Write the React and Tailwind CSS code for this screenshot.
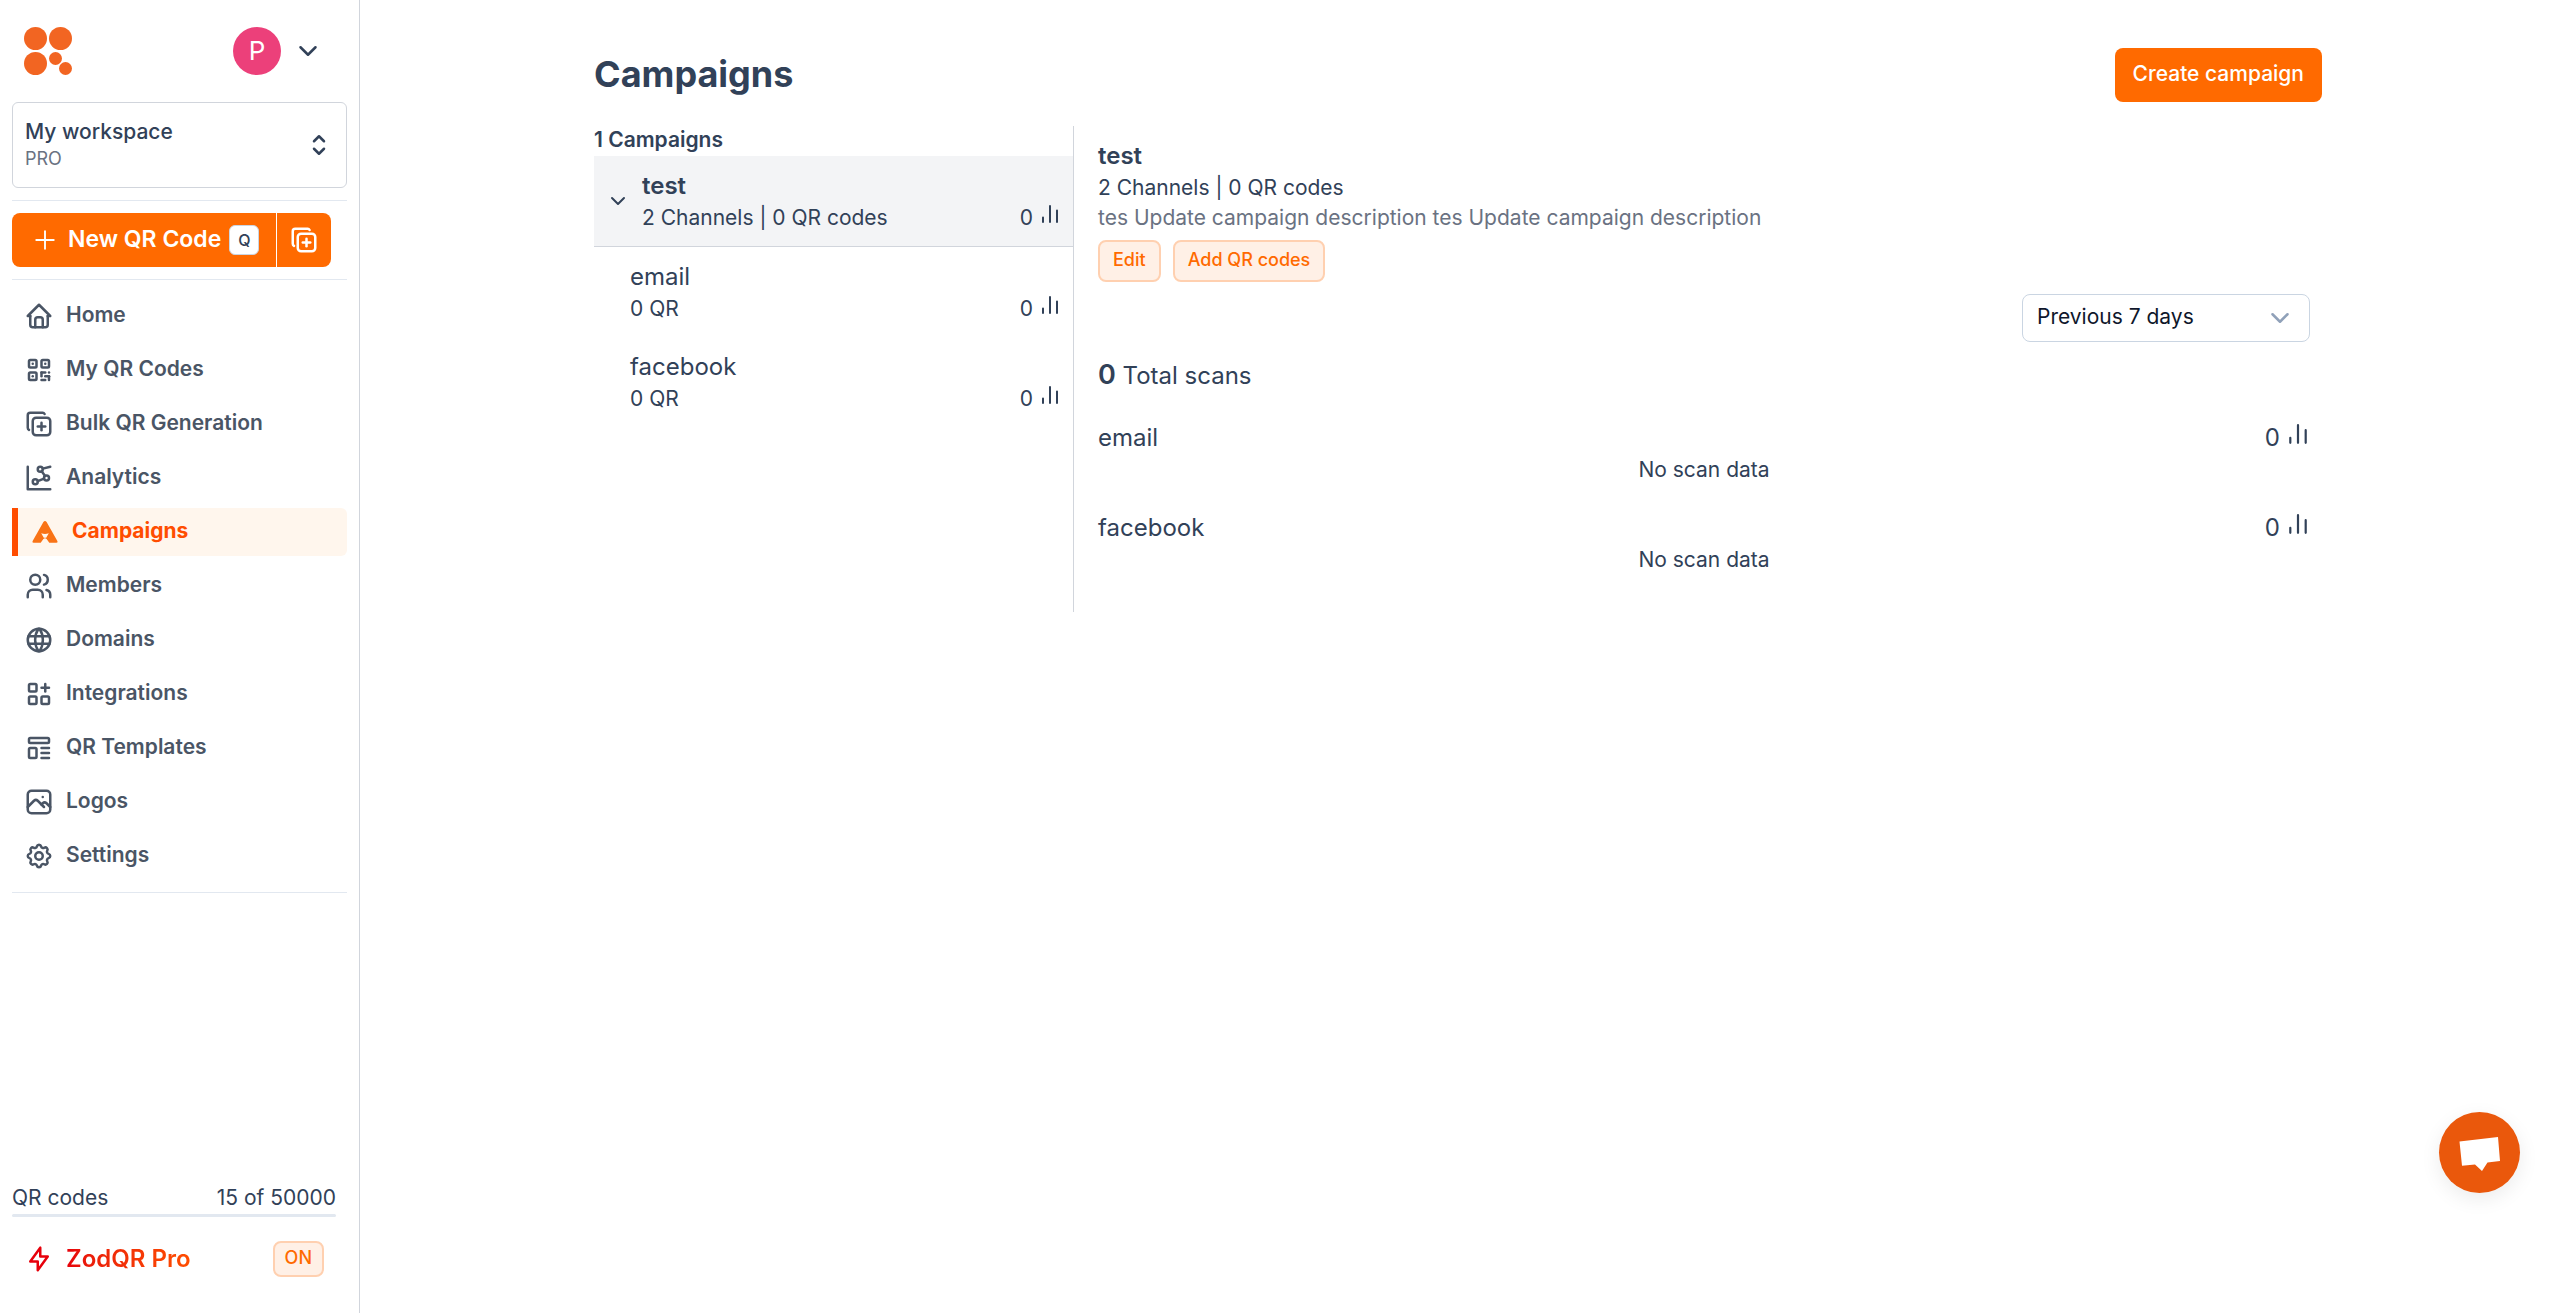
// src/App.jsx
import React, { useState } from 'react';
import {
  TbApps,
  TbBolt,
  TbChartDots2,
  TbChevronDown,
  TbCopyPlus,
  TbHome,
  TbPhoto,
  TbPlus,
  TbQrcode,
  TbSelector,
  TbSettings,
  TbTemplate,
  TbUsers,
  TbWorld,
} from 'react-icons/tb';

const Logo = () => (
  <svg viewBox="0 0 48 48" className="h-12 w-12 fill-[#f26522]" aria-hidden="true">
    <circle cx="11.5" cy="11.5" r="11.5" />
    <circle cx="36.5" cy="11.5" r="11.5" />
    <circle cx="11.5" cy="36.5" r="11.5" />
    <circle cx="31.5" cy="31.5" r="6.5" />
    <circle cx="41.5" cy="41.5" r="6.5" />
  </svg>
);

const CampaignIcon = ({ className }) => (
  <svg viewBox="0 0 30 30" className={className} aria-hidden="true">
    <path
      d="M13.4 5q1.6-2 3.2 0L27.5 24.2q.4 1.5-1.2 1.6h-7L16.6 22q-1.6-1.5-3.2 0l-2.7 3.8h-7q-1.6-.1-1.2-1.6z"
      fill="#f97316"
    />
    <path d="M11.2 16.3q3.8 1.2 7.6 0l-2.6 4.4h-2.4z" fill="#fff7ed" />
  </svg>
);

const Bars = ({ className }) => (
  <svg
    viewBox="0 0 18 20"
    className={className}
    fill="none"
    stroke="currentColor"
    strokeWidth="2"
    strokeLinecap="round"
    aria-hidden="true"
  >
    <path d="M2 13.5V18M9 2v16M16 6.5V18" />
  </svg>
);

const navItems = [
  { label: 'Home', icon: TbHome },
  { label: 'My QR Codes', icon: TbQrcode },
  { label: 'Bulk QR Generation', icon: TbCopyPlus },
  { label: 'Analytics', icon: TbChartDots2 },
  { label: 'Campaigns', icon: CampaignIcon, active: true },
  { label: 'Members', icon: TbUsers },
  { label: 'Domains', icon: TbWorld },
  { label: 'Integrations', icon: TbApps },
  { label: 'QR Templates', icon: TbTemplate },
  { label: 'Logos', icon: TbPhoto },
  { label: 'Settings', icon: TbSettings },
];

const channels = [
  { name: 'email', qr: 0, scans: 0 },
  { name: 'facebook', qr: 0, scans: 0 },
];

const Sidebar = () => (
  <aside className="flex w-[360px] shrink-0 flex-col border-r border-gray-300 px-3">
    <div className="flex items-center justify-between pt-[27px] pr-6 pl-3">
      <a href="#" aria-label="ZodQR home">
        <Logo />
      </a>
      <button type="button" aria-label="Account" className="flex items-center gap-3">
        <span className="flex h-12 w-12 items-center justify-center rounded-full bg-[#ec407a] text-[26px] leading-9 text-white">
          P
        </span>
        <TbChevronDown className="h-[30px] w-[30px]" />
      </button>
    </div>

    <button
      type="button"
      className="mt-[27px] flex h-[86px] items-center justify-between rounded-md border border-gray-300 px-3 text-left"
    >
      <span className="flex flex-col pb-0.5">
        <span className="text-[21px] leading-[30px] font-medium">My workspace</span>
        <span className="text-lg leading-6 text-gray-500">PRO</span>
      </span>
      <TbSelector className="h-[30px] w-[30px]" />
    </button>

    <hr className="mt-3 border-slate-200" />
    <div className="my-3 flex h-[54px] w-[319px] text-white">
      <button
        type="button"
        className="flex grow items-center rounded-l-lg border-r border-white bg-[#ff6a00] pl-[18px] text-[23px] leading-8 font-semibold"
      >
        <TbPlus className="mr-2 h-[30px] w-[30px]" strokeWidth={1.5} />
        <span className="pb-0.5">New QR Code</span>
        <kbd className="ml-2 flex h-[30px] w-[30px] items-center justify-center rounded-md border border-slate-300 bg-white font-[Inter] text-base font-medium text-slate-700">
          Q
        </kbd>
      </button>
      <button
        type="button"
        aria-label="Bulk create"
        className="flex w-[54px] items-center justify-center rounded-r-lg bg-[#ff6a00]"
      >
        <TbCopyPlus className="h-[30px] w-[30px]" />
      </button>
    </div>
    <hr className="border-slate-200" />

    <nav className="mt-3 flex flex-col gap-[6px]">
      {navItems.map(({ label, icon: Icon, active }) => (
        <a
          key={label}
          href="#"
          className={`flex h-12 items-center gap-3 pl-3 text-[21px] leading-7 ${
            active
              ? 'rounded-r-md border-l-6 border-[#ff4d00] bg-[#fff6ed] font-bold text-[#ff4d00]'
              : 'font-semibold text-gray-600'
          }`}
        >
          <Icon className="h-[30px] w-[30px]" />
          <span className="pb-0.5">{label}</span>
        </a>
      ))}
    </nav>
    <hr className="mt-3 border-slate-200" />

    <div className="mt-auto pr-[11px] pb-9">
      <div className="flex justify-between pb-0.5 text-[21px] leading-7">
        <span>QR codes</span>
        <span>15 of 50000</span>
      </div>
      <div className="h-[3px] rounded-full bg-slate-200" />
      <div className="mt-6 flex items-center justify-between pr-3 pl-3">
        <span className="flex items-center gap-3 text-2xl leading-9 font-semibold">
          <TbBolt className="h-[30px] w-[30px] text-[#e7000b]" />
          <span className="bg-linear-to-r from-[#e7000b] to-[#ff4d00] bg-clip-text text-transparent">ZodQR Pro</span>
        </span>
        <span className="flex h-9 items-center rounded-lg border-2 border-[#ffd0b0] bg-[#fff0e6] px-[10px] pb-0.5 text-lg font-medium text-[#ff6a00]">
          ON
        </span>
      </div>
    </div>
  </aside>
);

const ScanCount = ({ value }) => (
  <span className="flex items-center gap-2">
    {value}
    <Bars className="mb-2 h-5 w-[18px]" />
  </span>
);

const CampaignList = () => (
  <section className="w-[480px] shrink-0 border-r border-gray-300">
    <h2 className="pb-0.5 text-[21px] leading-7 font-semibold">1 Campaigns</h2>
    <button
      type="button"
      className="flex w-full items-center border-b border-gray-300 bg-gray-100 py-3 pr-[14px] pl-3 text-left"
    >
      <TbChevronDown className="mr-3 h-6 w-6" />
      <span className="grow">
        <span className="block text-2xl leading-9 font-semibold">test</span>
        <span className="flex justify-between pb-0.5 text-[21px] leading-7">
          2 Channels | 0 QR codes
          <ScanCount value={0} />
        </span>
      </span>
    </button>
    <ul>
      {channels.map((channel) => (
        <li key={channel.name} className="py-3 pr-[14px] pl-9">
          <div className="text-2xl leading-9">{channel.name}</div>
          <div className="flex justify-between pb-0.5 text-[21px] leading-7">
            <span>{channel.qr} QR</span>
            <ScanCount value={channel.scans} />
          </div>
        </li>
      ))}
    </ul>
  </section>
);

const CampaignDetail = () => {
  const [range, setRange] = useState('7');

  return (
    <section className="grow pt-3 pr-3 pb-9 pl-6">
      <h2 className="text-2xl leading-9 font-semibold">test</h2>
      <p className="pb-0.5 text-[21px] leading-7">2 Channels | 0 QR codes</p>
      <p className="pb-0.5 text-[21px] leading-7 text-gray-500">
        tes Update campaign description tes Update campaign description
      </p>
      <div className="mt-[6px] flex gap-3">
        {['Edit', 'Add QR codes'].map((label) => (
          <button
            key={label}
            type="button"
            className="h-[42px] rounded-lg border-2 border-[#ffd0b0] bg-[#fff0e6] px-[13px] pb-0.5 text-lg font-medium text-[#ff6a00]"
          >
            {label}
          </button>
        ))}
      </div>

      <div className="mt-3 flex justify-end">
        <div className="relative w-72">
          <select
            aria-label="Date range"
            value={range}
            onChange={(e) => setRange(e.target.value)}
            className="h-12 w-full appearance-none rounded-lg border border-slate-300 bg-white px-[14px] pb-0.5 text-[21px] leading-7 text-slate-900"
          >
            <option value="7">Previous 7 days</option>
            <option value="30">Previous 30 days</option>
          </select>
          <TbChevronDown className="pointer-events-none absolute top-[9px] right-[15px] h-[30px] w-[30px] text-slate-400" />
        </div>
      </div>

      <p className="mt-3 text-2xl leading-[41px]">
        <span className="text-[27px] font-semibold">0</span> Total scans
      </p>

      {channels.map((channel) => (
        <div key={channel.name} className="mt-6">
          <div className="flex items-center justify-between text-2xl leading-9">
            <h3>{channel.name}</h3>
            <span className="flex items-center gap-2 pr-0.5">
              {channel.scans}
              <Bars className="mb-2 h-[22px] w-5" />
            </span>
          </div>
          <p className="pb-0.5 text-center text-[21px] leading-7">No scan data</p>
        </div>
      ))}
    </section>
  );
};

const App = () => {
  return (
    <div className="flex min-h-screen bg-white font-[Inter,sans-serif] text-slate-700">
      <Sidebar />
      <main className="grow">
        <div className="mx-auto max-w-[1728px] pt-12">
          <header className="flex items-center justify-between">
            <h1 className="pb-0.5 text-4xl leading-[52px] font-bold">Campaigns</h1>
            <button
              type="button"
              className="h-[54px] rounded-lg bg-[#ff6a00] px-[18px] pb-0.5 text-[21px] leading-7 font-medium text-white"
            >
              Create campaign
            </button>
          </header>
          <div className="mt-6 flex">
            <CampaignList />
            <CampaignDetail />
          </div>
        </div>
      </main>

      {/* Chat launcher */}
      <button
        type="button"
        aria-label="Open chat"
        className="fixed right-9 bottom-[120px] h-[81px] w-[81px] rounded-full bg-[#ea580c] shadow-[0_6px_20px_rgba(0,0,0,0.08)]"
      >
        <svg viewBox="0 0 81 81" className="h-full w-full" aria-hidden="true">
          <path d="M20.5 29.5L59 25l2 24-12.5 1.5-5.5 8.5-7-6.5-13 1.3z" fill="#fff" />
        </svg>
      </button>
    </div>
  );
};

export default App;
